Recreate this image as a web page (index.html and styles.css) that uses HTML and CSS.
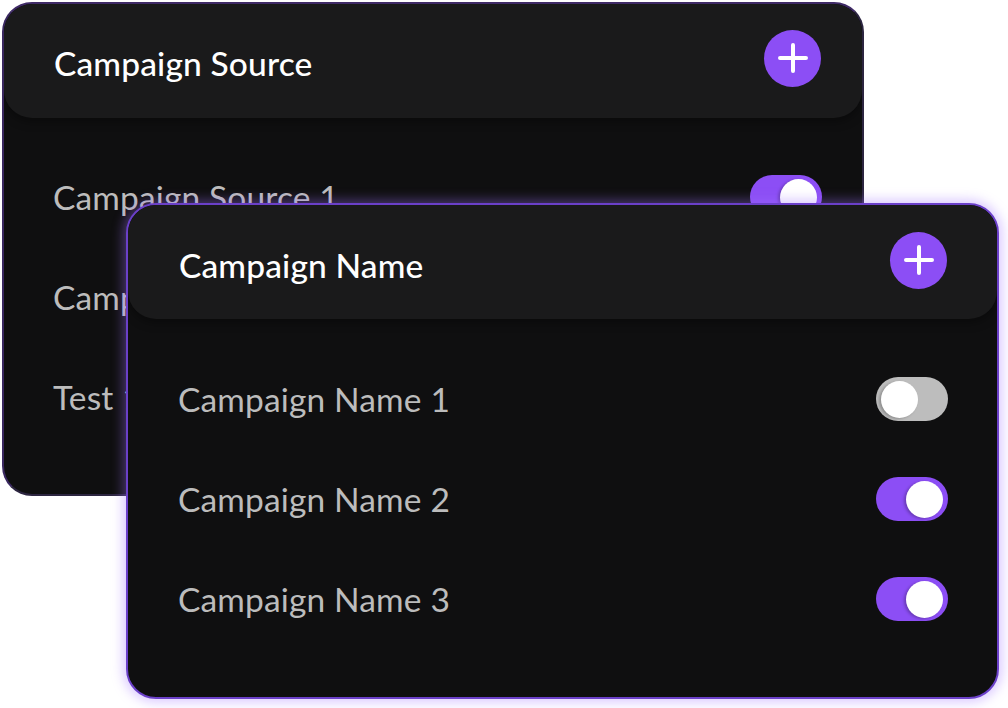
FILE: index.html
```html
<!DOCTYPE html>
<html lang="en">
<head>
<meta charset="utf-8">
<title>Campaign settings</title>
<link rel="stylesheet" href="styles.css">
</head>
<body>
<div class="stage">
  <section class="card card-back">
    <header class="card-head">
      <h2 class="card-title">Campaign Source</h2>
      <button class="add-btn" aria-label="Add">
        <svg viewBox="0 0 30 30" width="30" height="30"><path d="M15 2v26M2 15h26" stroke="#fff" stroke-width="4" stroke-linecap="round" fill="none"/></svg>
      </button>
    </header>
    <ul class="rows">
      <li class="row"><span class="row-label">Campaign Source 1</span><span class="toggle on"><span class="knob"></span></span></li>
      <li class="row"><span class="row-label">Campaign Source 2</span><span class="toggle on"><span class="knob"></span></span></li>
      <li class="row"><span class="row-label">Test 1</span><span class="toggle on"><span class="knob"></span></span></li>
    </ul>
  </section>
  <section class="card card-front">
    <header class="card-head">
      <h2 class="card-title">Campaign Name</h2>
      <button class="add-btn" aria-label="Add">
        <svg viewBox="0 0 30 30" width="30" height="30"><path d="M15 2v26M2 15h26" stroke="#fff" stroke-width="4" stroke-linecap="round" fill="none"/></svg>
      </button>
    </header>
    <ul class="rows">
      <li class="row"><span class="row-label">Campaign Name 1</span><span class="toggle"><span class="knob"></span></span></li>
      <li class="row"><span class="row-label">Campaign Name 2</span><span class="toggle on"><span class="knob"></span></span></li>
      <li class="row"><span class="row-label">Campaign Name 3</span><span class="toggle on"><span class="knob"></span></span></li>
    </ul>
  </section>
</div>
</body>
</html>
```
FILE: styles.css
```css
* { box-sizing: border-box; }
html, body { margin: 0; padding: 0; background: #ffffff; }
body { width: 1008px; height: 708px; overflow: hidden; font-family: "Lato", "Noto Sans", sans-serif; }

.stage {
  display: grid;
  grid-template-columns: 1fr;
  grid-template-rows: 1fr;
  width: 1008px;
  height: 708px;
}

.card {
  grid-area: 1 / 1;
  background: #0f0f10;
  border-radius: 30px;
  display: flex;
  flex-direction: column;
  overflow: hidden;
}

.card-back {
  margin: 2px 0 0 2px;
  width: 862px;
  height: 494px;
  border: 2px solid #2c2540;
  border-top-color: #3f2a66;
  border-left-color: #3a2860;
}

.card-front {
  margin: 203px 0 0 126px;
  width: 873px;
  height: 496px;
  border: 2px solid #6b40c9;
  box-shadow: 0 0 12px 3px rgba(160, 115, 255, 0.4);
  z-index: 1;
}

.card-head {
  display: flex;
  align-items: center;
  justify-content: space-between;
  height: 114px;
  background: #1a1a1b;
  border-radius: 28px;
  box-shadow: 0 4px 10px rgba(0, 0, 0, 0.35);
  flex: none;
}

.card-back .card-head { padding: 0 41px 6px 50px; }
.card-front .card-head { padding: 0 50px 4px 51px; }

.card-title {
  margin: 10px 0 0 0;
  color: #ffffff;
  font-size: 33.5px;
  font-weight: 500;
  letter-spacing: 0.15px;
}

.add-btn {
  width: 57px;
  height: 57px;
  border: none;
  border-radius: 50%;
  background: #8c4ef5;
  display: flex;
  align-items: center;
  justify-content: center;
  padding: 0;
}

.rows {
  list-style: none;
  margin: 0;
  padding: 30px 0 0 0;
}

.card-back .rows { padding-left: 49px; padding-right: 40px; padding-top: 29px; }
.card-front .rows { padding-left: 50px; padding-right: 49px; padding-top: 30px; }

.row {
  display: flex;
  align-items: center;
  justify-content: space-between;
  height: 100px;
}

.row-label {
  color: #bcbcbc;
  font-size: 33.5px;
  font-weight: 400;
  letter-spacing: 0.15px;
}

.toggle {
  width: 72px;
  height: 44px;
  border-radius: 22px;
  background: #bdbdbd;
  display: flex;
  align-items: center;
  padding: 0 5px;
  flex: none;
}

.toggle.on {
  background: #8c4ef5;
  justify-content: flex-end;
}

.knob {
  width: 37px;
  height: 37px;
  border-radius: 50%;
  background: #ffffff;
  box-shadow: -2px 1px 3px rgba(0, 0, 0, 0.25);
}
```
